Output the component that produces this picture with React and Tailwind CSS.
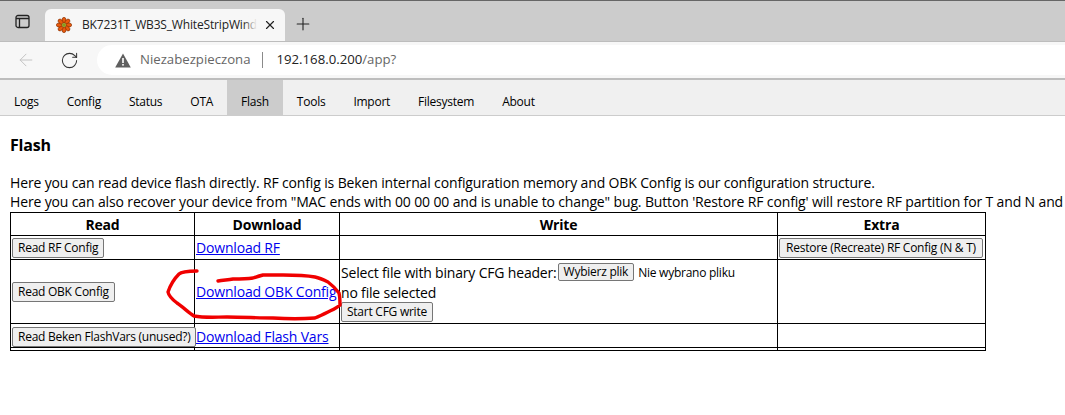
import React from 'react';
import { ArrowLeft, RotateCw, X, Plus } from 'lucide-react';

const tabs = ['Logs', 'Config', 'Status', 'OTA', 'Flash', 'Tools', 'Import', 'Filesystem', 'About'];

const Btn = ({ children, className = '' }) => (
  <button className={`h-[20px] px-[5px] bg-[#efefef] border border-[#767676] rounded-[2px] text-[12px] tracking-[-0.25px] leading-none text-black whitespace-nowrap ${className}`}>
    {children}
  </button>
);

const Favicon = () => (
  <svg width="16" height="16" viewBox="0 0 16 16">
    {[0, 45, 90, 135, 180, 225, 270, 315].map((a) => (
      <ellipse key={a} cx="8" cy="3.2" rx="2" ry="2.9" fill="#e8590c" stroke="#7a2e05" strokeWidth="0.6" transform={`rotate(${a} 8 8)`} />
    ))}
    <circle cx="8" cy="8" r="2" fill="#8a9a1a" />
  </svg>
);

const Scribble = () => (
  <svg className="absolute left-0 top-0 pointer-events-none" width="1065" height="415" viewBox="0 0 1065 415">
    <path
      d="M197 271 C190 271 182 271 179 274 C174 279 170 286 168 292 C169 297 173 300 177 303 C183 307 189 313 194 316 C205 318 216 317 227 317 C243 317 258 318 273 318 C288 319 302 319 315 318 C320 316 324 314 328 312 C332 310 337 308 340 305 C340 301 340 297 339 293 C336 289 332 285 328 282 C324 280 320 278 315 277 C304 275 294 275 283 275 C276 275 269 275 263 275 C259 276 256 277 253 278 C246 279 240 279 233 279 C228 280 223 280 218 281"
      fill="none"
      stroke="#f00000"
      strokeWidth="3.4"
      strokeLinecap="round"
      strokeLinejoin="round"
    />
  </svg>
);

const App = () => {
  return (
    <div className="relative w-[1065px] h-[415px] overflow-hidden bg-white font-['Open_Sans',sans-serif] text-black">
      {/* Browser tab strip */}
      <div className="h-[41px] bg-[#cccccc] border-t border-[#666666] flex items-end">
        <div className="w-[45px] h-[32px] flex items-center justify-center -translate-y-[4px]">
          <svg width="15" height="15" viewBox="0 0 15 15" fill="none" stroke="#222" strokeWidth="1.3">
            <rect x="1" y="1.5" width="13" height="12" rx="2" />
            <path d="M1 4.5h13M4.5 4.5v9" />
          </svg>
        </div>
        <div className="w-[240px] h-[32px] bg-[#f7f7f7] rounded-t-[6px] flex items-center pl-[11px] pr-[8px]">
          <Favicon />
          <div className="relative ml-[10px] w-[175px] overflow-hidden whitespace-nowrap text-[12px] tracking-[-0.16px] text-[#222]">
            BK7231T_WB3S_WhiteStripWindow
            <div className="absolute right-0 top-0 bottom-0 w-[14px] bg-gradient-to-r from-transparent to-[#f7f7f7]" />
          </div>
          <X size={14} className="ml-auto text-[#222]" />
        </div>
        <div className="ml-[6px] mb-[1px] w-[24px] h-[32px] flex items-center justify-center">
          <Plus size={20} strokeWidth={1.3} className="text-[#222]" />
        </div>
      </div>

      {/* Address bar */}
      <div className="h-[39px] bg-[#f7f7f7] border-t border-[#bdbdbd] border-b-2 border-b-[#bdbdbd] flex items-center">
        <ArrowLeft size={20} strokeWidth={1.2} className="ml-[16px] text-[#c4c4c4]" />
        <RotateCw size={19} strokeWidth={1.3} className="ml-[24px] text-[#333]" />
        <div className="ml-[18px] flex-1 h-[30px] bg-white rounded-l-full flex items-center pl-[18px]">
          <svg width="16" height="15" viewBox="0 0 16 15">
            <path d="M8 .5 15.8 14.5H.2Z" fill="#5f5f5f" />
            <rect x="7.2" y="5" width="1.6" height="5" fill="#fff" />
            <rect x="7.2" y="11" width="1.6" height="1.6" fill="#fff" />
          </svg>
          <span className="ml-[9px] text-[13.2px] text-[#666666]">Niezabezpieczona</span>
          <span className="ml-[12px] h-[16px] w-px bg-[#8a8a8a]" />
          <span className="ml-[13px] text-[13.2px] text-[#222]">
            192.168.0.200<span className="text-[#666666]">/app?</span>
          </span>
        </div>
      </div>

      {/* App tabs */}
      <div className="h-[36px] bg-[#f0f0f0] border-b border-[#cccccc] flex">
        {tabs.map((t) => (
          <div key={t} className={`px-[14px] flex items-center pt-[9px] text-[12px] tracking-[-0.25px] ${t === 'Flash' ? 'bg-[#cccccc]' : ''}`}>
            {t}
          </div>
        ))}
      </div>

      {/* Page content */}
      <div className="px-[10px]">
        <h3 className="mt-[19px] text-[16px] leading-[20px] font-bold tracking-[-0.2px]">Flash</h3>
        <p className="mt-[18px] text-[14px] leading-[19px] tracking-[-0.14px] whitespace-nowrap">
          Here you can read device flash directly. RF config is Beken internal configuration memory and OBK Config is our configuration structure.
          <br />
          Here you can also recover your device from "MAC ends with 00 00 00 and is unable to change" bug. Button 'Restore RF config' will restore RF partition for T and N and fix that.
        </p>

        <table className="mt-px w-[975px] table-fixed border-collapse border border-black text-[14px] leading-[19px] tracking-[-0.18px]">
          <colgroup>
            <col className="w-[184px]" />
            <col className="w-[145px]" />
            <col className="w-[438px]" />
            <col className="w-[208px]" />
          </colgroup>
          <tbody>
            <tr className="h-[23px]">
              <th className="border border-black text-center font-bold">Read</th>
              <th className="border border-black text-center font-bold">Download</th>
              <th className="border border-black text-center font-bold">Write</th>
              <th className="border border-black text-center font-bold">Extra</th>
            </tr>
            <tr className="h-[24px]">
              <td className="border border-black px-px"><Btn>Read RF Config</Btn></td>
              <td className="border border-black pl-px"><a href="#" className="text-[#0000ee] underline">Download RF</a></td>
              <td className="border border-black" />
              <td className="border border-black px-px"><Btn className="w-[204px]">Restore (Recreate) RF Config (N &amp; T)</Btn></td>
            </tr>
            <tr className="h-[64px]">
              <td className="border border-black px-px"><Btn>Read OBK Config</Btn></td>
              <td className="border border-black pl-px"><a href="#" className="text-[#0000ee] underline whitespace-nowrap">Download OBK Config</a></td>
              <td className="border border-black px-px pt-px">
                <div className="flex items-center h-[20px] whitespace-nowrap">
                  Select file with binary CFG header:
                  <Btn className="ml-px !h-[18px]">Wybierz plik</Btn>
                  <span className="ml-[4px] text-[12px] tracking-[-0.25px]">Nie wybrano pliku</span>
                </div>
                <div className="h-[20px] flex items-center">no file selected</div>
                <Btn className="block">Start CFG write</Btn>
              </td>
              <td className="border border-black" />
            </tr>
            <tr className="h-[24px]">
              <td className="border border-black px-px pt-px"><Btn>Read Beken FlashVars (unused?)</Btn></td>
              <td className="border border-black pl-px pt-px"><a href="#" className="text-[#0000ee] underline whitespace-nowrap">Download Flash Vars</a></td>
              <td className="border border-black" />
              <td className="border border-black" />
            </tr>
            <tr className="h-[3px]">
              <td className="border border-black p-0" />
              <td className="border border-black p-0" />
              <td className="border border-black p-0" />
              <td className="border border-black p-0" />
            </tr>
          </tbody>
        </table>
      </div>

      <Scribble />
    </div>
  );
};

export default App;
